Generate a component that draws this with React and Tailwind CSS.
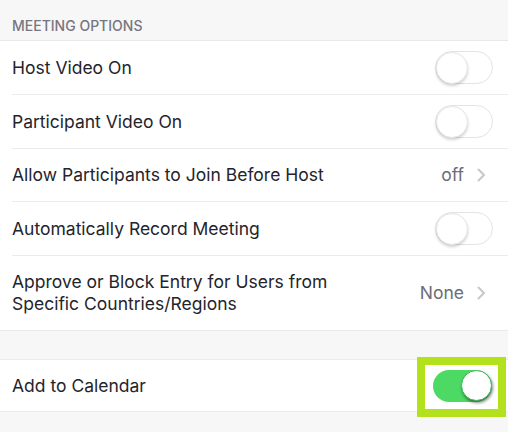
import React from "react";

const Toggle = ({ on }) => {
  if (on) {
    return (
      <div className="flex h-[32px] w-[59px] items-center justify-end rounded-full bg-[#4cd964]">
        <div className="h-[31px] w-[31px] rounded-full border border-[#3fb556] bg-white shadow-[1px_2px_3px_rgba(0,0,0,0.45)]" />
      </div>
    );
  }
  return (
    <div className="flex h-[33px] w-[58px] items-center justify-start rounded-full border-[1.5px] border-[#e3e3e3] bg-white">
      <div className="h-[32px] w-[32px] rounded-full border border-[#e6e6e6] bg-white shadow-[0_2px_3px_rgba(0,0,0,0.18)]" />
    </div>
  );
};

const Chevron = () => (
  <svg width="9" height="14" viewBox="0 0 9 14" className="ml-[13px]">
    <polyline
      points="1.5,1.5 7,7 1.5,12.5"
      fill="none"
      stroke="#c7c7cc"
      strokeWidth="2"
      strokeLinecap="round"
      strokeLinejoin="round"
    />
  </svg>
);

const Row = ({ label, height = "h-[54px]", children }) => (
  <div className="pl-3">
    <div className={`flex ${height} items-center justify-between border-b border-[#ebebeb]`}>
      <span className="text-[17.5px] leading-[22px] text-[#24242c]">{label}</span>
      {children}
    </div>
  </div>
);

export default function App() {
  return (
    <div
      className="h-[432px] w-[508px] overflow-hidden bg-[#f7f7f7]"
      style={{ fontFamily: "Inter, Roboto, 'Liberation Sans', sans-serif" }}
    >
      {/* section header */}
      <div className="flex h-[41px] items-end border-b border-[#e8e8e8] px-3 pb-[7px]">
        <span className="text-[14px] font-medium leading-none text-[#76767f]">
          MEETING OPTIONS
        </span>
      </div>

      <div className="bg-white">
        <Row label="Host Video On">
          <div className="pr-[15px]">
            <Toggle />
          </div>
        </Row>
        <Row label="Participant Video On">
          <div className="pr-[15px]">
            <Toggle />
          </div>
        </Row>
        <Row label="Allow Participants to Join Before Host" height="h-[53px]">
          <div className="flex items-center pr-[22px]">
            <span className="text-[17.5px] text-[#6d6d75]">off</span>
            <Chevron />
          </div>
        </Row>
        <Row label="Automatically Record Meeting">
          <div className="pr-[15px]">
            <Toggle />
          </div>
        </Row>
        <div className="flex h-[75px] items-center justify-between border-b border-[#ebebeb] pl-3 pr-[22px]">
          <span className="text-[17.5px] leading-[22px] text-[#24242c]">
            Approve or Block Entry for Users from
            <br />
            Specific Countries/Regions
          </span>
          <div className="flex items-center">
            <span className="text-[17.5px] text-[#6d6d75]">None</span>
            <Chevron />
          </div>
        </div>
      </div>

      <div className="h-[28px]" />

      <div className="relative flex h-[53px] items-center justify-between border-y border-[#ebebeb] bg-white pl-3 pr-[16px]">
        <span className="text-[17.5px] leading-[22px] text-[#24242c]">Add to Calendar</span>
        <Toggle on />
        {/* highlight annotation */}
        <div className="pointer-events-none absolute right-[2px] top-[-3px] h-[60px] w-[89px] border-[8px] border-[#b3e21c]" />
      </div>
    </div>
  );
}
